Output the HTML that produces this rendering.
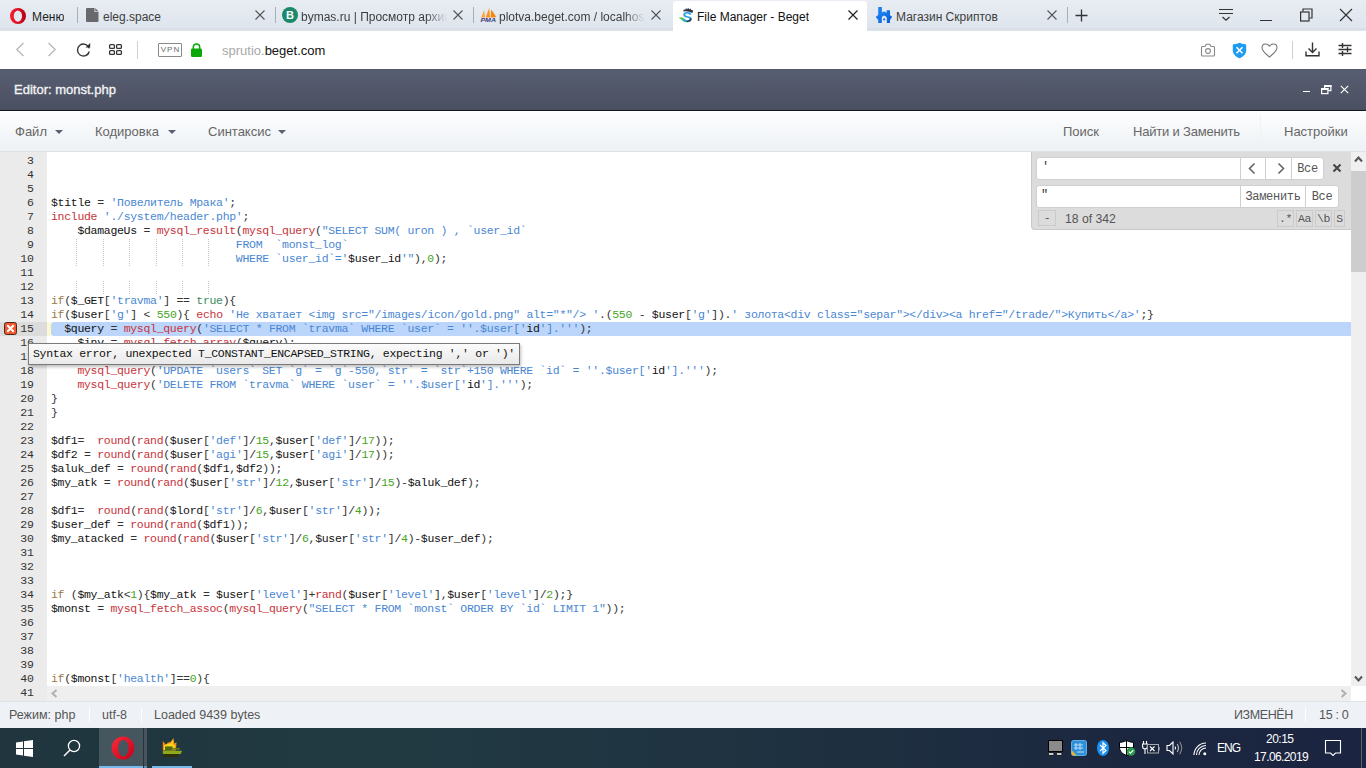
<!DOCTYPE html>
<html><head><meta charset="utf-8">
<style>
*{margin:0;padding:0;box-sizing:border-box}
html,body{width:1366px;height:768px;overflow:hidden;background:#fff;font-family:"Liberation Sans",sans-serif}
.a{position:absolute}
/* tab bar */
#tabs{left:0;top:0;width:1366px;height:31px;background:linear-gradient(#e8edf3 0px,#dfe5ed 28px,#d5dce5 29px,#dde3ea 30px)}
.tsep{position:absolute;top:7px;width:1px;height:16px;background:#a9afb8}
.ttxt{position:absolute;top:10px;font-size:12px;color:#3d3d3d;white-space:nowrap;overflow:hidden}
.tx{position:absolute;top:10px;width:10px;height:10px}
#atab{left:673px;top:1px;width:194px;height:30px;background:#fff;border-radius:3px 3px 0 0}
/* address bar */
#addr{left:0;top:31px;width:1366px;height:38px;background:#fff}
/* editor header */
#ehead{left:0;top:69px;width:1366px;height:42px;background:linear-gradient(#4f566a 0px,#585e71 2px,#4a5061 41px);border-bottom:1px solid #12161f}
#ehead .t{position:absolute;left:14px;top:82px}
/* menu */
#menu{left:0;top:111px;width:1366px;height:41px;background:linear-gradient(#fdfefe,#edf1f5);border-bottom:1px solid #e1e2e3}
.mi{position:absolute;top:124px;font-size:13px;color:#666;white-space:nowrap}
.car{position:absolute;top:130px;width:0;height:0;border-left:4px solid transparent;border-right:4px solid transparent;border-top:4px solid #5b6170}
/* code */
#gutter{left:0;top:152px;width:47px;height:549px;background:#ebebeb;overflow:hidden}
#code{left:47px;top:152px;width:1304px;height:534px;background:#fff;overflow:hidden}
.ln{position:absolute;left:0;width:34px;height:14px;text-align:right;font:11.5px/14px "Liberation Mono",monospace;padding-top:0;color:#333}
.ln.act{background:#dcdcdc;width:47px;padding-right:13px}
.cl{position:absolute;left:4px;height:14px;white-space:pre;font:11.5px/14px "Liberation Mono",monospace;letter-spacing:-0.3px;padding-top:0;color:#111;width:1300px}
.cl.sel{background:#bcd5fa;border-radius:3px 0 0 3px}
i{font-style:normal}
i.p{color:#333}
i.s{color:#4a87d2}
i.f{color:#c8323a}
i.e{color:#c8323a}
i.k{color:#9a7a4a}
i.n{color:#45a51c}
i.t{color:#3a8a60}
.gd{width:1px;background:repeating-linear-gradient(#c4c4c4 0 1px,transparent 1px 2px)}
/* scrollbars */
#vsb{left:1351px;top:152px;width:15px;height:534px;background:#efefef}
#hsb{left:47px;top:686px;width:1304px;height:15px;background:#efefef}

/* search */
#sp{left:1031px;top:152px;width:320px;height:78px;background:#dcdcdc;border-left:1px solid #c9c9c9;border-bottom:1px solid #c9c9c9;border-bottom-left-radius:4px}
.inp{position:absolute;background:#fff;border:1px solid #cfcfcf;height:23px}
.sb{position:absolute;background:#fff;border:1px solid #cfcfcf;height:23px;font:12px/23px "Liberation Mono",monospace;letter-spacing:-0.3px;color:#555;text-align:center}
.tb{position:absolute;top:210px;height:17px;border:1px solid #cbcbcb;font:11.5px/15px "Liberation Mono",monospace;letter-spacing:-0.3px;color:#555;text-align:center}
/* status */
#status{left:0;top:701px;width:1366px;height:27px;background:#eef2f6;border-top:1px solid #e0e3e6}
.st{position:absolute;top:708px;font-size:12.5px;color:#555;white-space:nowrap}
/* taskbar */
#task{left:0;top:728px;width:1366px;height:40px;background:linear-gradient(90deg,#20353d 0%,#213a42 30%,#1e2f40 65%,#1b2640 85%,#1b2541 100%)}
</style></head><body>
<div id="tabs" class="a"></div>
<div id="atab" class="a"></div>
<!-- opera menu -->
<svg class="a" style="left:9px;top:8px" width="18" height="17" viewBox="0 0 18 17"><defs><linearGradient id="og" x1="0" x2="1"><stop offset="0" stop-color="#ff1b2d"/><stop offset="1" stop-color="#b70017"/></linearGradient></defs><ellipse cx="9" cy="8" rx="8" ry="8" fill="url(#og)"/><ellipse cx="8.9" cy="8.1" rx="4.2" ry="5.6" fill="#e3e9f0"/></svg>
<div class="ttxt" style="left:32px;color:#1e1e1e">Меню</div>
<div class="tsep" style="left:77px"></div>
<svg class="a" style="left:86px;top:8px" width="13" height="14" viewBox="0 0 13 14"><path d="M1 0H8.5L12.5 4V13a1 1 0 0 1-1 1H1a1 1 0 0 1-1-1V1a1 1 0 0 1 1-1z" fill="#67696c"/><path d="M8.5 0V4H12.5z" fill="#dfe5ee"/><path d="M9.3 0.3V3.3H12.3z" fill="#67696c"/></svg>
<div class="ttxt" style="left:103px;width:150px">eleg.space</div>
<svg class="tx" style="left:255px" viewBox="0 0 10 10"><path d="M0.5 0.5L9.5 9.5M9.5 0.5L0.5 9.5" stroke="#555" stroke-width="1.1"/></svg>
<div class="tsep" style="left:275px"></div>
<div class="a" style="left:282px;top:7px;width:16px;height:16px;border-radius:50%;background:#1a8a6a;color:#fff;font:bold 11px/16px 'Liberation Sans',sans-serif;text-align:center">B</div>
<div class="ttxt" style="left:301px;width:146px;-webkit-mask-image:linear-gradient(90deg,#000 125px,transparent 146px)">bymas.ru | Просмотр архива</div>
<svg class="tx" style="left:453px" viewBox="0 0 10 10"><path d="M0.5 0.5L9.5 9.5M9.5 0.5L0.5 9.5" stroke="#555" stroke-width="1.1"/></svg>
<div class="tsep" style="left:473px"></div>
<svg class="a" style="left:480px;top:6px" width="17" height="17" viewBox="0 0 17 17"><path d="M1.2 11.5L4.2 4L5 11.5z" fill="#f9a53a"/><path d="M5.6 11.5L9.3 1.8L10 11.5z" fill="#f7931e"/><path d="M10.6 11.5L11.2 3.6L16.2 10.8L14 11.5z" fill="#f5870f"/><text x="0.4" y="16" textLength="15.6" lengthAdjust="spacingAndGlyphs" font-family="Liberation Sans" font-weight="bold" font-style="italic" font-size="6" fill="#3a3f82">PMA</text></svg>
<div class="ttxt" style="left:499px;width:146px;-webkit-mask-image:linear-gradient(90deg,#000 125px,transparent 146px)">plotva.beget.com / localhost</div>
<svg class="tx" style="left:651px" viewBox="0 0 10 10"><path d="M0.5 0.5L9.5 9.5M9.5 0.5L0.5 9.5" stroke="#555" stroke-width="1.1"/></svg>
<svg class="a" style="left:678px;top:7px" width="17" height="16" viewBox="0 0 17 16"><path d="M0.5 10.8Q4 9.3 7 12.3Q9 14.3 11 13.8L9.5 15.2Q6.5 15.5 4.2 13.4Q2.3 11.5 0.5 10.8z" fill="#5cc53a"/><text x="4.3" y="14.6" font-family="Liberation Sans" font-weight="bold" font-size="14.5" fill="#2aa3ea">S</text><path d="M5.2 4.6L6 2L7 3.2L8 1L9 2.6L10.2 0.8L11.2 2.6L12.6 1.5L13.2 3L15.3 3.6L14.3 6Q10 3.6 5.2 4.6z" fill="#2b3440"/><path d="M8.5 13.8Q12 13.5 12.3 11L13.8 11.5Q13.5 15 8.8 15.2z" fill="#364555"/></svg>
<div class="ttxt" style="left:697px;color:#111">File Manager - Beget</div>
<svg class="tx" style="left:848px" viewBox="0 0 10 10"><path d="M0.5 0.5L9.5 9.5M9.5 0.5L0.5 9.5" stroke="#222" stroke-width="1.2"/></svg>
<svg class="a" style="left:875px;top:6px" width="18" height="18" viewBox="0 0 18 18"><defs><linearGradient id="hg" x1="0" y1="0" x2="1" y2="1"><stop offset="0" stop-color="#1f86f0"/><stop offset="1" stop-color="#0a5fe0"/></linearGradient></defs><path d="M3.2 1H6.9V17H3.2zM11.6 4.2H15V17H11.6z" fill="url(#hg)"/><path d="M1.8 12.3L9 7.3L16.2 12.3" fill="none" stroke="url(#hg)" stroke-width="3.6" stroke-linejoin="round"/><path d="M6.9 17V12.5A2.1 2.1 0 0 1 11.6 12.5V17z" fill="#e2e8ef"/><circle cx="9.2" cy="13.4" r="1.1" fill="#1a6ee8"/></svg>
<div class="ttxt" style="left:896px">Магазин Скриптов</div>
<svg class="tx" style="left:1047px" viewBox="0 0 10 10"><path d="M0.5 0.5L9.5 9.5M9.5 0.5L0.5 9.5" stroke="#555" stroke-width="1.1"/></svg>
<div class="tsep" style="left:1067px"></div>
<svg class="a" style="left:1075px;top:9px" width="13" height="13" viewBox="0 0 13 13"><path d="M6.5 0.5V12.5M0.5 6.5H12.5" stroke="#333" stroke-width="1.3"/></svg>
<svg class="a" style="left:1218px;top:8px" width="16" height="14" viewBox="0 0 16 14"><path d="M1 1.5H15M1 5.5H15" stroke="#333" stroke-width="1.2"/><path d="M4.5 9L8 12.2L11.5 9" stroke="#333" stroke-width="1.3" fill="none"/></svg>
<div class="a" style="left:1260px;top:20px;width:12px;height:1.2px;background:#333"></div>
<svg class="a" style="left:1300px;top:8px" width="13" height="14" viewBox="0 0 13 14"><rect x="0.6" y="4" width="8.4" height="9" fill="none" stroke="#333" stroke-width="1.2"/><path d="M3 3.5V1H12V10H9.5" fill="none" stroke="#333" stroke-width="1.2"/></svg>
<svg class="a" style="left:1339px;top:8px" width="14" height="14" viewBox="0 0 14 14"><path d="M1 1L13 13M13 1L1 13" stroke="#333" stroke-width="1.2"/></svg>
<div id="addr" class="a"></div>
<svg class="a" style="left:15px;top:42px" width="10" height="15" viewBox="0 0 10 15"><path d="M8.5 1L1.8 7.5L8.5 14" fill="none" stroke="#b4b4b4" stroke-width="1.2"/></svg>
<svg class="a" style="left:47px;top:42px" width="10" height="15" viewBox="0 0 10 15"><path d="M1.5 1L8.2 7.5L1.5 14" fill="none" stroke="#b4b4b4" stroke-width="1.2"/></svg>
<svg class="a" style="left:76px;top:42px" width="16" height="16" viewBox="0 0 16 16"><path d="M13.2 6.2A6 6 0 1 0 13.3 9.5" fill="none" stroke="#333" stroke-width="1.4"/><path d="M9.5 5.5H14.2V1z" fill="#333"/></svg>
<svg class="a" style="left:108px;top:43px" width="15" height="13" viewBox="0 0 15 13"><rect x="1.6" y="1.6" width="4.8" height="3.8" rx="1" fill="none" stroke="#333" stroke-width="1.3"/><rect x="8.6" y="1.6" width="4.8" height="3.8" rx="1" fill="none" stroke="#333" stroke-width="1.3"/><rect x="1.6" y="7.6" width="4.8" height="3.8" rx="1" fill="none" stroke="#333" stroke-width="1.3"/><rect x="8.6" y="7.6" width="4.8" height="3.8" rx="1" fill="none" stroke="#333" stroke-width="1.3"/></svg>
<div class="a" style="left:137px;top:41px;width:1px;height:18px;background:#d0d0d0"></div>
<div class="a" style="left:158px;top:43px;width:24px;height:14px;border:1px solid #8a8a8a;border-radius:1px;font:8px/12px 'Liberation Sans',sans-serif;color:#6a6a6a;text-align:center;letter-spacing:1px;padding-left:1px">VPN</div>
<svg class="a" style="left:190px;top:43px" width="13" height="14" viewBox="0 0 13 14"><path d="M3.3 6V4.3a3.2 3.2 0 0 1 6.4 0V6" fill="none" stroke="#0aa70a" stroke-width="1.5"/><rect x="1" y="5.5" width="11" height="8.5" rx="1.3" fill="#0aa70a"/></svg>
<div class="a" style="left:222px;top:43px;font-size:13px;color:#a8a8a8;white-space:nowrap">sprutio.<span style="color:#111">beget.com</span></div>
<svg class="a" style="left:1200px;top:43px" width="16" height="14" viewBox="0 0 16 14"><path d="M1.5 4.5a1 1 0 0 1 1-1H5L6.3 1.2H9.7L11 3.5H13.5a1 1 0 0 1 1 1V12a1 1 0 0 1-1 1H2.5a1 1 0 0 1-1-1z" fill="none" stroke="#888" stroke-width="1.1"/><circle cx="8" cy="8" r="2.4" fill="none" stroke="#888" stroke-width="1.1"/></svg>
<svg class="a" style="left:1232px;top:42px" width="15" height="17" viewBox="0 0 15 17"><path d="M7.5 0.8C5 2 2.5 2.4 0.8 2.4V8.5C0.8 12 4 15 7.5 16.3C11 15 14.2 12 14.2 8.5V2.4C12.5 2.4 10 2 7.5 0.8z" fill="#1e9cf0"/><path d="M4.5 5.3L10.5 11.3M10.5 5.3L4.5 11.3" stroke="#fff" stroke-width="1.6"/></svg>
<svg class="a" style="left:1261px;top:43px" width="17" height="15" viewBox="0 0 17 15"><path d="M8.5 14C5 11 1 8.2 1 4.8C1 2.6 2.7 1 4.7 1C6.4 1 7.6 2 8.5 3.2C9.4 2 10.6 1 12.3 1C14.3 1 16 2.6 16 4.8C16 8.2 12 11 8.5 14z" fill="none" stroke="#777" stroke-width="1.1"/></svg>
<div class="a" style="left:1292px;top:41px;width:1px;height:18px;background:#d0d0d0"></div>
<svg class="a" style="left:1305px;top:42px" width="15" height="15" viewBox="0 0 15 15"><path d="M7.5 0.5V10.5M3.5 6.5L7.5 10.5L11.5 6.5" fill="none" stroke="#333" stroke-width="1.4"/><path d="M1 9.5V13.8H14V9.5" fill="none" stroke="#333" stroke-width="1.4"/></svg>
<svg class="a" style="left:1338px;top:42px" width="14" height="15" viewBox="0 0 14 15"><path d="M0.5 3.5H13.5M0.5 7.5H13.5M0.5 11.5H13.5" stroke="#333" stroke-width="1.3"/><path d="M4.5 1V6M9.5 5V10M4.5 9V14" stroke="#333" stroke-width="1.4"/></svg>
<div id="ehead" class="a"></div>
<div class="a" style="left:14px;top:82px;font-size:13px;-webkit-text-stroke:0.35px #f2f3f5;color:#f2f3f5">Editor: monst.php</div>
<div class="a" style="left:1303px;top:90.5px;width:7px;height:1.6px;background:#fff"></div>
<svg class="a" style="left:1320px;top:84px" width="13" height="11" viewBox="0 0 13 11"><rect x="4.6" y="1.6" width="6.3" height="5" fill="none" stroke="#fff" stroke-width="1.2"/><rect x="4" y="1" width="7.5" height="2" fill="#fff"/><rect x="1.6" y="4.6" width="6.3" height="5" fill="#525969" stroke="#fff" stroke-width="1.2"/><rect x="1" y="4" width="7.5" height="2" fill="#fff"/></svg>
<svg class="a" style="left:1340px;top:85px" width="9" height="9" viewBox="0 0 9 9"><path d="M0.8 0.8L8.2 8.2M8.2 0.8L0.8 8.2" stroke="#fff" stroke-width="1.2"/></svg>
<div id="menu" class="a"></div>
<div class="mi" style="left:15px">Файл</div><div class="car" style="left:55px"></div>
<div class="mi" style="left:95px">Кодировка</div><div class="car" style="left:168px"></div>
<div class="mi" style="left:208px">Синтаксис</div><div class="car" style="left:278px"></div>
<div class="mi" style="left:1063px">Поиск</div>
<div class="mi" style="left:1133px;letter-spacing:-0.2px">Найти и Заменить</div>
<div class="a" style="left:1260px;top:115px;width:1px;height:32px;background:#f0f2f4"></div>
<div class="mi" style="left:1284px">Настройки</div>
<div id="gutter" class="a"><div style="position:absolute;left:0;top:-152px;width:47px;height:900px">
<div class="ln" style="top:140px">2</div>
<div class="ln" style="top:154px">3</div>
<div class="ln" style="top:168px">4</div>
<div class="ln" style="top:182px">5</div>
<div class="ln" style="top:196px">6</div>
<div class="ln" style="top:210px">7</div>
<div class="ln" style="top:224px">8</div>
<div class="ln" style="top:238px">9</div>
<div class="ln" style="top:252px">10</div>
<div class="ln" style="top:266px">11</div>
<div class="ln" style="top:280px">12</div>
<div class="ln" style="top:294px">13</div>
<div class="ln" style="top:308px">14</div>
<div class="ln act" style="top:322px">15</div>
<div class="ln" style="top:336px">16</div>
<div class="ln" style="top:350px">17</div>
<div class="ln" style="top:364px">18</div>
<div class="ln" style="top:378px">19</div>
<div class="ln" style="top:392px">20</div>
<div class="ln" style="top:406px">21</div>
<div class="ln" style="top:420px">22</div>
<div class="ln" style="top:434px">23</div>
<div class="ln" style="top:448px">24</div>
<div class="ln" style="top:462px">25</div>
<div class="ln" style="top:476px">26</div>
<div class="ln" style="top:490px">27</div>
<div class="ln" style="top:504px">28</div>
<div class="ln" style="top:518px">29</div>
<div class="ln" style="top:532px">30</div>
<div class="ln" style="top:546px">31</div>
<div class="ln" style="top:560px">32</div>
<div class="ln" style="top:574px">33</div>
<div class="ln" style="top:588px">34</div>
<div class="ln" style="top:602px">35</div>
<div class="ln" style="top:616px">36</div>
<div class="ln" style="top:630px">37</div>
<div class="ln" style="top:644px">38</div>
<div class="ln" style="top:658px">39</div>
<div class="ln" style="top:672px">40</div>
<div class="ln" style="top:686px">41</div>
</div></div>
<div id="code" class="a"><div style="position:absolute;left:0;top:-152px;width:1304px;height:900px">
<div class="cl" style="top:140px"><i class="e">include</i> <i class="s">'./system/func.php'</i><i class="p">;</i></div>
<div class="cl" style="top:154px"></div>
<div class="cl" style="top:168px"></div>
<div class="cl" style="top:182px"></div>
<div class="cl" style="top:196px">$title <i class="p">=</i> <i class="s">'Повелитель Мрака'</i><i class="p">;</i></div>
<div class="cl" style="top:210px"><i class="e">include</i> <i class="s">'./system/header.php'</i><i class="p">;</i></div>
<div class="cl" style="top:224px">    $damageUs <i class="p">=</i> <i class="f">mysql_result</i><i class="p">(</i><i class="f">mysql_query</i><i class="p">(</i><i class="s">"SELECT SUM( uron ) , `user_id`</i></div>
<div class="cl" style="top:238px">                            <i class="s">FROM  `monst_log`</i></div>
<div class="cl" style="top:252px">                            <i class="s">WHERE `user_id`='</i>$user_id<i class="s">'"</i><i class="p">),</i><i class="n">0</i><i class="p">);</i></div>
<div class="cl" style="top:266px"></div>
<div class="cl" style="top:280px"></div>
<div class="cl" style="top:294px"><i class="k">if</i><i class="p">(</i>$_GET<i class="p">[</i><i class="s">'travma'</i><i class="p">]</i> <i class="p">=</i><i class="p">=</i> <i class="t">true</i><i class="p">)</i><i class="p">{</i></div>
<div class="cl" style="top:308px"><i class="k">if</i><i class="p">(</i>$user<i class="p">[</i><i class="s">'g'</i><i class="p">]</i> <i class="p">&lt;</i> <i class="n">550</i><i class="p">)</i><i class="p">{</i> <i class="e">echo</i> <i class="s">'Не хватает &lt;img src="/images/icon/gold.png" alt="*"/&gt; '</i><i class="p">.</i><i class="p">(</i><i class="n">550</i> <i class="p">-</i> $user<i class="p">[</i><i class="s">'g'</i><i class="p">]</i><i class="p">)</i><i class="p">.</i><i class="s">' золота&lt;div class="separ"&gt;&lt;/div&gt;&lt;a href="/trade/"&gt;Купить&lt;/a&gt;'</i><i class="p">;</i><i class="p">}</i></div>
<div class="cl sel" style="top:322px">  $query <i class="p">=</i> <i class="f">mysql_query</i><i class="p">(</i><i class="s">'SELECT * FROM `travma` WHERE `user` = '</i><i class="s">'.$user['</i>id<i class="s">'].'</i><i class="s">''</i><i class="p">)</i><i class="p">;</i></div>
<div class="cl" style="top:336px">    $inv <i class="p">=</i> <i class="f">mysql_fetch_array</i><i class="p">(</i>$query<i class="p">)</i><i class="p">;</i></div>
<div class="cl" style="top:350px">    <i class="k">if</i><i class="p">(</i>$inv<i class="p">[</i><i class="s">'id'</i><i class="p">]</i> <i class="p">=</i><i class="p">=</i> <i class="n">0</i><i class="p">)</i><i class="p">{</i></div>
<div class="cl" style="top:364px">    <i class="f">mysql_query</i><i class="p">(</i><i class="s">'UPDATE `users` SET `g` = `g`-550,`str` = `str`+150 WHERE `id` = '</i><i class="s">'.$user['</i>id<i class="s">'].'</i><i class="s">''</i><i class="p">)</i><i class="p">;</i></div>
<div class="cl" style="top:378px">    <i class="f">mysql_query</i><i class="p">(</i><i class="s">'DELETE FROM `travma` WHERE `user` = '</i><i class="s">'.$user['</i>id<i class="s">'].'</i><i class="s">''</i><i class="p">)</i><i class="p">;</i></div>
<div class="cl" style="top:392px"><i class="p">}</i></div>
<div class="cl" style="top:406px"><i class="p">}</i></div>
<div class="cl" style="top:420px"></div>
<div class="cl" style="top:434px">$df1<i class="p">=</i>  <i class="f">round</i><i class="p">(</i><i class="f">rand</i><i class="p">(</i>$user<i class="p">[</i><i class="s">'def'</i><i class="p">]</i><i class="p">/</i><i class="n">15</i><i class="p">,</i>$user<i class="p">[</i><i class="s">'def'</i><i class="p">]</i><i class="p">/</i><i class="n">17</i><i class="p">)</i><i class="p">)</i><i class="p">;</i></div>
<div class="cl" style="top:448px">$df2 <i class="p">=</i> <i class="f">round</i><i class="p">(</i><i class="f">rand</i><i class="p">(</i>$user<i class="p">[</i><i class="s">'agi'</i><i class="p">]</i><i class="p">/</i><i class="n">15</i><i class="p">,</i>$user<i class="p">[</i><i class="s">'agi'</i><i class="p">]</i><i class="p">/</i><i class="n">17</i><i class="p">)</i><i class="p">)</i><i class="p">;</i></div>
<div class="cl" style="top:462px">$aluk_def <i class="p">=</i> <i class="f">round</i><i class="p">(</i><i class="f">rand</i><i class="p">(</i>$df1<i class="p">,</i>$df2<i class="p">)</i><i class="p">)</i><i class="p">;</i></div>
<div class="cl" style="top:476px">$my_atk <i class="p">=</i> <i class="f">round</i><i class="p">(</i><i class="f">rand</i><i class="p">(</i>$user<i class="p">[</i><i class="s">'str'</i><i class="p">]</i><i class="p">/</i><i class="n">12</i><i class="p">,</i>$user<i class="p">[</i><i class="s">'str'</i><i class="p">]</i><i class="p">/</i><i class="n">15</i><i class="p">)</i><i class="p">-</i>$aluk_def<i class="p">)</i><i class="p">;</i></div>
<div class="cl" style="top:490px"></div>
<div class="cl" style="top:504px">$df1<i class="p">=</i>  <i class="f">round</i><i class="p">(</i><i class="f">rand</i><i class="p">(</i>$lord<i class="p">[</i><i class="s">'str'</i><i class="p">]</i><i class="p">/</i><i class="n">6</i><i class="p">,</i>$user<i class="p">[</i><i class="s">'str'</i><i class="p">]</i><i class="p">/</i><i class="n">4</i><i class="p">)</i><i class="p">)</i><i class="p">;</i></div>
<div class="cl" style="top:518px">$user_def <i class="p">=</i> <i class="f">round</i><i class="p">(</i><i class="f">rand</i><i class="p">(</i>$df1<i class="p">)</i><i class="p">)</i><i class="p">;</i></div>
<div class="cl" style="top:532px">$my_atacked <i class="p">=</i> <i class="f">round</i><i class="p">(</i><i class="f">rand</i><i class="p">(</i>$user<i class="p">[</i><i class="s">'str'</i><i class="p">]</i><i class="p">/</i><i class="n">6</i><i class="p">,</i>$user<i class="p">[</i><i class="s">'str'</i><i class="p">]</i><i class="p">/</i><i class="n">4</i><i class="p">)</i><i class="p">-</i>$user_def<i class="p">)</i><i class="p">;</i></div>
<div class="cl" style="top:546px"></div>
<div class="cl" style="top:560px"></div>
<div class="cl" style="top:574px"></div>
<div class="cl" style="top:588px"><i class="k">if</i> <i class="p">(</i>$my_atk<i class="p">&lt;</i><i class="n">1</i><i class="p">)</i><i class="p">{</i>$my_atk <i class="p">=</i> $user<i class="p">[</i><i class="s">'level'</i><i class="p">]</i><i class="p">+</i><i class="f">rand</i><i class="p">(</i>$user<i class="p">[</i><i class="s">'level'</i><i class="p">]</i><i class="p">,</i>$user<i class="p">[</i><i class="s">'level'</i><i class="p">]</i><i class="p">/</i><i class="n">2</i><i class="p">)</i><i class="p">;</i><i class="p">}</i></div>
<div class="cl" style="top:602px">$monst <i class="p">=</i> <i class="f">mysql_fetch_assoc</i><i class="p">(</i><i class="f">mysql_query</i><i class="p">(</i><i class="s">"SELECT * FROM `monst` ORDER BY `id` LIMIT 1"</i><i class="p">)</i><i class="p">)</i><i class="p">;</i></div>
<div class="cl" style="top:616px"></div>
<div class="cl" style="top:630px"></div>
<div class="cl" style="top:644px"></div>
<div class="cl" style="top:658px"></div>
<div class="cl" style="top:672px"><i class="k">if</i><i class="p">(</i>$monst<i class="p">[</i><i class="s">'health'</i><i class="p">]</i><i class="p">=</i><i class="p">=</i><i class="n">0</i><i class="p">)</i><i class="p">{</i></div>
<div class="cl" style="top:686px"></div>
</div></div>
<div class="a" style="left:0;top:322px;width:47px;height:14px;background:#dcdcdc"></div>
<div class="a" style="left:15px;top:322px;text-align:right;font:11.5px/14px 'Liberation Mono',monospace;color:#333;width:19px">15</div>
<svg class="a" style="left:4px;top:322px" width="13" height="13" viewBox="0 0 13 13"><rect x="0.5" y="0.5" width="12" height="12" rx="2" fill="#f2582f" stroke="#4a2a1a" stroke-width="1"/><path d="M3.3 3.3L9.7 9.7M9.7 3.3L3.3 9.7" stroke="#fff" stroke-width="2"/></svg>
<div class="a" style="left:47px;top:322px;width:4px;height:14px;background:#fdf8cf"></div>
<div class="a gd" style="left:76px;top:239px;height:27px"></div><div class="a gd" style="left:76px;top:281px;height:13px"></div>
<div class="a gd" style="left:103px;top:239px;height:27px"></div><div class="a gd" style="left:103px;top:281px;height:13px"></div>
<div class="a gd" style="left:129px;top:239px;height:27px"></div><div class="a gd" style="left:129px;top:281px;height:13px"></div>
<div class="a gd" style="left:156px;top:239px;height:27px"></div><div class="a gd" style="left:156px;top:281px;height:13px"></div>
<div class="a gd" style="left:182px;top:239px;height:27px"></div><div class="a gd" style="left:182px;top:281px;height:13px"></div>
<div class="a gd" style="left:208px;top:239px;height:27px"></div><div class="a gd" style="left:208px;top:281px;height:13px"></div>
<div id="vsb" class="a"></div>
<div class="a" style="left:1351px;top:152px;width:15px;height:19px;background:#f0f0f0"></div>
<div class="a" style="left:1351px;top:171px;width:15px;height:101px;background:#cdcdcd"></div>
<svg class="a" style="left:1354px;top:155px" width="9" height="8" viewBox="0 0 9 8"><path d="M1 6.5L4.5 2.5L8 6.5" fill="none" stroke="#555" stroke-width="2"/></svg>
<svg class="a" style="left:1354px;top:675px" width="9" height="8" viewBox="0 0 9 8"><path d="M1 1.5L4.5 5.5L8 1.5" fill="none" stroke="#555" stroke-width="2"/></svg>

<div id="sp" class="a"></div>
<div class="inp" style="left:1036px;top:157px;width:205px;border-radius:3px 0 0 3px"></div>
<div class="a" style="left:1042px;top:160px;font:12px/14px 'Liberation Mono',monospace;color:#333">'</div>
<div class="sb" style="left:1240px;top:157px;width:26px"></div>
<svg class="a" style="left:1247px;top:162px" width="10" height="13" viewBox="0 0 10 13"><path d="M7.5 1.5L2.5 6.5L7.5 11.5" fill="none" stroke="#666" stroke-width="1.6"/></svg>
<div class="sb" style="left:1265px;top:157px;width:27px"></div>
<svg class="a" style="left:1276px;top:162px" width="10" height="13" viewBox="0 0 10 13"><path d="M2.5 1.5L7.5 6.5L2.5 11.5" fill="none" stroke="#666" stroke-width="1.6"/></svg>
<div class="sb" style="left:1291px;top:157px;width:33px;border-radius:0 3px 3px 0">Все</div>
<svg class="a" style="left:1332px;top:163px" width="10" height="10" viewBox="0 0 10 10"><path d="M1.5 1.5L8.5 8.5M8.5 1.5L1.5 8.5" stroke="#444" stroke-width="2"/></svg>
<div class="inp" style="left:1036px;top:185px;width:205px;border-radius:3px 0 0 3px"></div>
<div class="a" style="left:1041px;top:188px;font:12px/14px 'Liberation Mono',monospace;color:#333">"</div>
<div class="sb" style="left:1240px;top:185px;width:66px">Заменить</div>
<div class="sb" style="left:1305px;top:185px;width:34px;border-radius:0 3px 3px 0">Все</div>
<div class="tb" style="left:1038px;width:18px;height:16px;line-height:14px">-</div>
<div class="a" style="left:1065px;top:212px;font-size:12.2px;color:#555">18 of 342</div>
<div class="tb" style="left:1277px;width:17px">.*</div>
<div class="tb" style="left:1296px;width:17px">Aa</div>
<div class="tb" style="left:1315px;width:17px">\b</div>
<div class="tb" style="left:1334px;width:11px">S</div>

<div id="hsb" class="a"></div>
<svg class="a" style="left:1340px;top:689px" width="8" height="9" viewBox="0 0 8 9"><path d="M1.5 1L5.5 4.5L1.5 8" fill="none" stroke="#b0b0b0" stroke-width="2"/></svg>
<svg class="a" style="left:50px;top:689px" width="8" height="9" viewBox="0 0 8 9"><path d="M6.5 1L2.5 4.5L6.5 8" fill="none" stroke="#b0b0b0" stroke-width="2"/></svg>
<div class="a" style="left:28px;top:343px;width:492px;height:22px;border:1px solid #7a7a7a;background:linear-gradient(#fbfbfb,#e9e9e9);box-shadow:1px 2px 3px rgba(0,0,0,0.25);font:11.5px/19px 'Liberation Mono',monospace;letter-spacing:-0.3px;color:#111;padding-left:4px;white-space:pre">Syntax error, unexpected T_CONSTANT_ENCAPSED_STRING, expecting ',' or ')'</div>

<div id="status" class="a"></div>
<div class="a" style="left:89px;top:708px;width:1px;height:14px;background:#fff"></div>
<div class="a" style="left:141px;top:708px;width:1px;height:14px;background:#fff"></div>
<div class="a" style="left:1305px;top:708px;width:1px;height:14px;background:#fff"></div>
<div class="st" style="left:9px">Режим: php</div>
<div class="st" style="left:102px">utf-8</div>
<div class="st" style="left:154px">Loaded 9439 bytes</div>
<div class="st" style="left:1234px;letter-spacing:-0.4px">ИЗМЕНЁН</div>
<div class="st" style="left:1319px;letter-spacing:-0.3px">15 : 0</div>
<div id="task" class="a"></div>
<svg class="a" style="left:16px;top:740px" width="17" height="17" viewBox="0 0 17 17"><path d="M0 2.4L7 1.4V8H0zM8 1.2L17 0V8H8zM0 9H7V15.6L0 14.6zM8 9H17V17L8 15.8z" fill="#fff"/></svg>
<svg class="a" style="left:63px;top:739px" width="18" height="18" viewBox="0 0 18 18"><circle cx="11" cy="7" r="5.6" fill="none" stroke="#fff" stroke-width="1.3"/><path d="M7 11L1 17" stroke="#fff" stroke-width="1.4"/></svg>
<div class="a" style="left:99px;top:728px;width:44px;height:40px;background:#46565e"></div>
<div class="a" style="left:144px;top:728px;width:3px;height:40px;background:#46555c"></div>
<div class="a" style="left:143px;top:728px;width:1px;height:40px;background:#27343a"></div>
<div class="a" style="left:99px;top:766px;width:44px;height:2px;background:#76b9ed"></div>
<div class="a" style="left:144px;top:766px;width:3px;height:2px;background:#5d8fb5"></div>
<div class="a" style="left:152px;top:766px;width:40px;height:2px;background:#76b9ed"></div>
<svg class="a" style="left:111px;top:736px" width="24" height="24" viewBox="0 0 24 24"><defs><linearGradient id="og2" x1="0" y1="0" x2="1" y2="1"><stop offset="0" stop-color="#ff2a3a"/><stop offset="1" stop-color="#c0001a"/></linearGradient></defs><ellipse cx="12" cy="12" rx="11.3" ry="11.5" fill="url(#og2)"/><ellipse cx="12.3" cy="12.2" rx="5.2" ry="8.3" fill="#46565e"/></svg>
<svg class="a" style="left:162px;top:737px" width="21" height="21" viewBox="0 0 21 21"><path d="M0.8 4L3.8 7.5L6 5.5L8.5 5L11.6 1L12.2 6.5L14.5 5.2L14.2 10L13.8 13.5H0.8z" fill="#f38a1a"/><path d="M2 8.5L5.5 7L8.5 6.2L11 2.8L11.5 8.5L13.2 7.5L12.8 13H2z" fill="#ffd21e"/><rect x="3" y="9.4" width="7.6" height="4" fill="#4d6b12"/><rect x="10.6" y="11" width="7.3" height="1.6" fill="#5c7a16"/><path d="M0.9 13.8H20L18.8 17H0.9z" fill="#8ea81c"/><rect x="1.2" y="17" width="15" height="3" rx="1" fill="#2f300a"/></svg>
<svg class="a" style="left:1048px;top:740px" width="15" height="16" viewBox="0 0 15 16"><rect x="0.5" y="0.5" width="14" height="11" fill="#8a8a8a" stroke="#000" stroke-width="1"/><rect x="0.5" y="12.5" width="5.5" height="3" rx="1" fill="#ccc" stroke="#000" stroke-width="0.8"/><rect x="8.5" y="12.5" width="5.5" height="3" rx="1" fill="#ccc" stroke="#000" stroke-width="0.8"/></svg>
<svg class="a" style="left:1071px;top:740px" width="16" height="16" viewBox="0 0 16 16"><rect x="0.5" y="0.5" width="15" height="15" rx="2" fill="#2f8fd8" stroke="#5ab0ea" stroke-width="1"/><path d="M0.5 10L6 15.5H2.5a2 2 0 0 1-2-2z" fill="#e3b33a"/><path d="M3 5H12M3 8H12M5 3V10M9 3V10M6 12H13" stroke="#cfe8fa" stroke-width="0.9"/></svg>
<svg class="a" style="left:1097px;top:740px" width="12" height="16" viewBox="0 0 12 16"><ellipse cx="6" cy="8" rx="6" ry="8" fill="#1a8ff0"/><path d="M3 5L9 10.5L6 13.3V2.7L9 5.5L3 11" fill="none" stroke="#fff" stroke-width="1.2"/></svg>
<svg class="a" style="left:1119px;top:740px" width="17" height="16" viewBox="0 0 17 16"><path d="M7.5 0.5C5 1.8 2.5 2.3 0.5 2.3V7.5C0.5 11 3.5 14 7.5 15.5C11.5 14 14.5 11 14.5 7.5V2.3C12.5 2.3 10 1.8 7.5 0.5z" fill="#fff" stroke="#000" stroke-width="1"/><path d="M7.5 0.5V15.5M0.5 7.5H14.5" stroke="#000" stroke-width="1"/><circle cx="12" cy="11.5" r="4.3" fill="#2a9a4a"/><path d="M9.8 11.6L11.5 13.2L14.3 10.2" fill="none" stroke="#fff" stroke-width="1.1"/></svg>
<svg class="a" style="left:1142px;top:741px" width="18" height="13" viewBox="0 0 18 13"><path d="M1.5 0V3M4.5 0V3M0.6 3H5.4V5.5A2.4 2.4 0 0 1 0.6 5.5zM3 7.5V13" fill="none" stroke="#fff" stroke-width="1.1"/><rect x="5.5" y="3.5" width="11" height="8.5" fill="none" stroke="#aaa" stroke-width="1"/><rect x="16.5" y="6" width="1.2" height="3.5" fill="#aaa"/><path d="M8 5.5L12.5 10M12.5 5.5L8 10" stroke="#fff" stroke-width="1.1"/></svg>
<svg class="a" style="left:1166px;top:741px" width="18" height="15" viewBox="0 0 18 15"><path d="M1 4.5H3.5L7 1V13L3.5 9.5H1z" fill="none" stroke="#fff" stroke-width="1.1"/><path d="M9 5.5Q10.2 7 9 8.5" fill="none" stroke="#fff" stroke-width="1.1"/><path d="M11.2 3Q13.8 7 11.2 11" fill="none" stroke="#bbb" stroke-width="1.1"/><path d="M13.6 0.8Q17.8 7 13.6 13.2" fill="none" stroke="#888" stroke-width="1.1"/></svg>
<svg class="a" style="left:1193px;top:742px" width="14" height="14" viewBox="0 0 14 14"><path d="M1 13A12 12 0 0 1 13 1M3.5 13A9.5 9.5 0 0 1 13 3.5M6 13A7 7 0 0 1 13 6" fill="none" stroke="#fff" stroke-width="1.1"/><circle cx="11.8" cy="11.8" r="1.5" fill="#fff"/></svg>
<div class="a" style="left:1217px;top:741px;font-size:12px;letter-spacing:-0.9px;color:#fff">ENG</div>
<div class="a" style="left:1266px;top:732px;font-size:12px;letter-spacing:-0.5px;color:#fff">20:15</div>
<div class="a" style="left:1254px;top:750px;font-size:12px;letter-spacing:-0.6px;color:#fff">17.06.2019</div>
<svg class="a" style="left:1324px;top:739px" width="18" height="18" viewBox="0 0 18 18"><path d="M1.5 1.5H16.5V14H11.5L9 16.5L6.5 14H1.5z" fill="none" stroke="#fff" stroke-width="1.1"/></svg>
<div class="a" style="left:1361px;top:728px;width:1px;height:40px;background:#59636f"></div>
</body></html>
